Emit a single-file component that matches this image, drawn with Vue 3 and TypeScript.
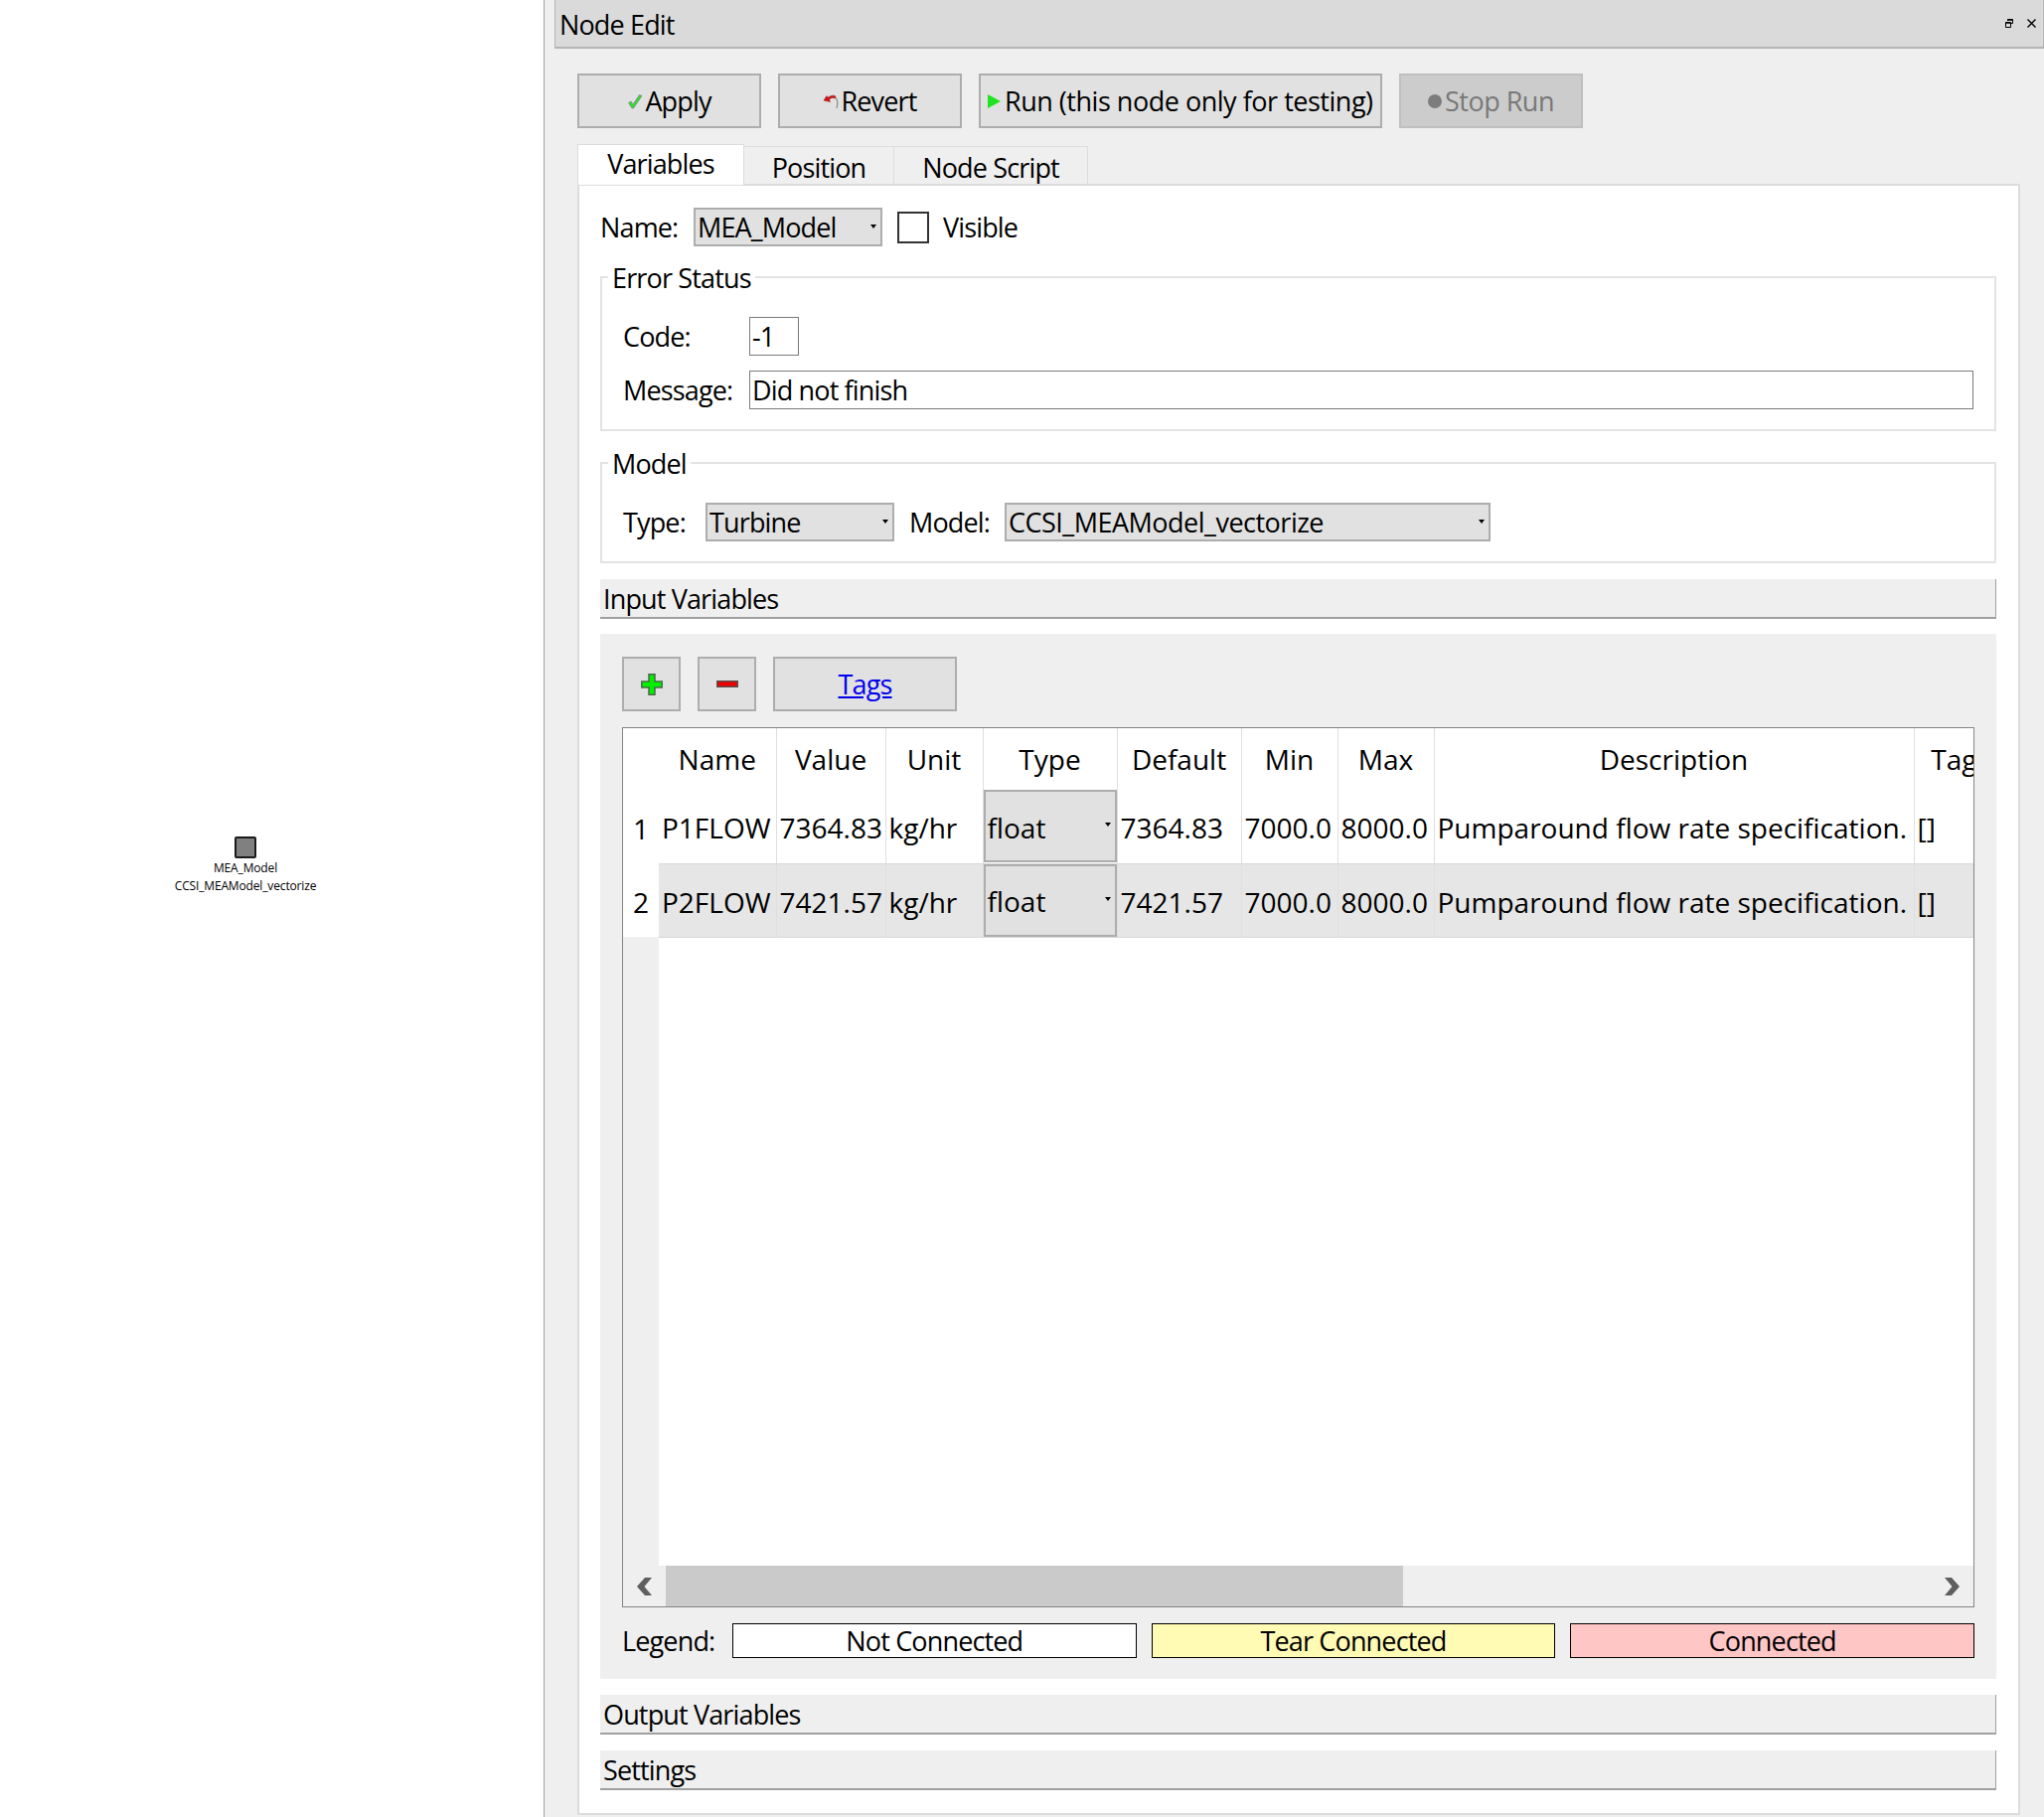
<script setup lang="ts">
interface Row {
  id: number
  name: string
  value: string
  unit: string
  type: string
  def: string
  min: string
  max: string
  desc: string
  tags: string
}

const columns = ['Name', 'Value', 'Unit', 'Type', 'Default', 'Min', 'Max', 'Description', 'Tags']

const rows: Row[] = [
  { id: 1, name: 'P1FLOW', value: '7364.83', unit: 'kg/hr', type: 'float', def: '7364.83', min: '7000.0', max: '8000.0', desc: 'Pumparound flow rate specification.', tags: '[]' },
  { id: 2, name: 'P2FLOW', value: '7421.57', unit: 'kg/hr', type: 'float', def: '7421.57', min: '7000.0', max: '8000.0', desc: 'Pumparound flow rate specification.', tags: '[]' }
]
</script>

<template>
  <div class="app">
    <div class="canvas">
      <div class="node">
        <div class="node-box" />
        <div class="node-label">MEA_Model</div>
        <div class="node-label">CCSI_MEAModel_vectorize</div>
      </div>
    </div>

    <div class="dock">
      <div class="dock-title">
        <span>Node Edit</span>
        <div class="dock-controls">
          <svg width="8" height="9" viewBox="0 0 8 9">
            <path d="M2.500 2V.5h5v4H6M.5 3.500h5v5h-5z" fill="none" stroke="#000" />
            <path d="M2.500 1h5M.5 4h5" fill="none" stroke="#000" stroke-width="1.500" />
          </svg>
          <svg width="9" height="9" viewBox="0 0 9 9">
            <path d="M.5.5l8 8M8.500.5l-8 8" fill="none" stroke="#000" stroke-width="1.400" />
          </svg>
        </div>
      </div>

      <div class="dock-body">
        <div class="actions">
          <button class="btn">
            <svg width="16" height="16" viewBox="0 0 16 16">
              <path d="M1.500 9.500L4 8l2 3L12.500 1.500 15 2.500 6.500 15H5z" fill="#2fdc2f" stroke="#8a8a8a" stroke-width=".8" />
            </svg>
            Apply
          </button>
          <button class="btn">
            <svg width="16" height="16" viewBox="0 0 16 16">
              <path d="M14 15c1.500-5 1-10-2-11" fill="none" stroke="#8a8a8a" stroke-width="1.200" />
              <path d="M1 7l3-4.500 1 1.800C8 2 11 1.500 13 3L12 5C10 4 8 4.500 6.500 6.500l1 2z" fill="#d01414" stroke="#8a1010" stroke-width=".5" />
            </svg>
            Revert
          </button>
          <button class="btn btn-run">
            <svg width="13" height="14" viewBox="0 0 13 14">
              <path d="M0 0l13 7L0 14z" fill="#1fe41f" />
            </svg>
            Run (this node only for testing)
          </button>
          <button class="btn btn-disabled">
            <span class="stop-dot" />
            Stop Run
          </button>
        </div>

        <div class="tabs">
          <div class="tab tab-active">Variables</div>
          <div class="tab tab-position">Position</div>
          <div class="tab tab-script">Node Script</div>
        </div>

        <div class="pane">
          <div class="name-row">
            <label class="name-label">Name:</label>
            <div class="combo name-combo">MEA_Model<i class="arrow" /></div>
            <span class="check" />
            <label>Visible</label>
          </div>

          <fieldset class="group error-group">
            <legend>Error Status</legend>
            <div class="form-row">
              <label class="form-label">Code:</label>
              <div class="field code-field">-1</div>
            </div>
            <div class="form-row">
              <label class="form-label">Message:</label>
              <div class="field message-field">Did not finish</div>
            </div>
          </fieldset>

          <fieldset class="group model-group">
            <legend>Model</legend>
            <div class="form-row">
              <label class="type-label">Type:</label>
              <div class="combo type-combo">Turbine<i class="arrow" /></div>
              <label class="model-label">Model:</label>
              <div class="combo model-combo">CCSI_MEAModel_vectorize<i class="arrow" /></div>
            </div>
          </fieldset>

          <div class="section-bar input-bar">Input Variables</div>

          <div class="input-panel">
            <div class="toolbar">
              <button class="btn btn-icon">
                <svg width="22" height="22" viewBox="0 0 22 22">
                  <path d="M8 .8h6v7.200h7.200v6H14v7.200H8V14H.8V8H8z" fill="#00f000" stroke="#4a6a4a" stroke-width="1.500" />
                </svg>
              </button>
              <button class="btn btn-icon">
                <svg width="22" height="7" viewBox="0 0 22 7">
                  <path d="M.8.8h20.400v5.400H.8z" fill="#f00000" stroke="#5a4a4a" stroke-width="1.500" />
                </svg>
              </button>
              <button class="btn btn-tags"><a class="tags-link">Tags</a></button>
            </div>

            <div class="grid">
              <table class="grid-table">
                <colgroup>
                  <col class="c-head"><col class="c-name"><col class="c-value"><col class="c-unit"><col class="c-type">
                  <col class="c-def"><col class="c-min"><col class="c-max"><col class="c-desc"><col class="c-tags">
                </colgroup>
                <thead>
                  <tr>
                    <th class="row-head" />
                    <th v-for="c in columns" :key="c">{{ c }}</th>
                  </tr>
                </thead>
                <tbody>
                  <tr v-for="r in rows" :key="r.id" :class="{ alt: r.id % 2 === 0 }">
                    <th class="row-head">{{ r.id }}</th>
                    <td>{{ r.name }}</td>
                    <td>{{ r.value }}</td>
                    <td>{{ r.unit }}</td>
                    <td class="type-cell"><div class="combo cell-combo">{{ r.type }}<i class="arrow" /></div></td>
                    <td>{{ r.def }}</td>
                    <td>{{ r.min }}</td>
                    <td>{{ r.max }}</td>
                    <td>{{ r.desc }}</td>
                    <td>{{ r.tags }}</td>
                  </tr>
                  <tr class="filler">
                    <th class="row-head" />
                    <td colspan="9" />
                  </tr>
                </tbody>
              </table>
              <div class="scrollbar">
                <div class="scroll-btn">
                  <svg width="17" height="18" viewBox="0 0 17 18"><path d="M9 0h7L8.500 9l7.500 9H9L1 9z" fill="#5f5f5f" /></svg>
                </div>
                <div class="scroll-thumb" />
                <div class="scroll-track" />
                <div class="scroll-btn">
                  <svg width="17" height="18" viewBox="0 0 17 18"><path d="M8 0H1l7.500 9L1 18h7l8-9z" fill="#5f5f5f" /></svg>
                </div>
              </div>
            </div>

            <div class="legend-row">
              <label>Legend:</label>
              <div class="legend-box not-connected">Not Connected</div>
              <div class="legend-box tear">Tear Connected</div>
              <div class="legend-box connected">Connected</div>
            </div>
          </div>

          <div class="section-bar output-bar">Output Variables</div>
          <div class="section-bar settings-bar">Settings</div>
        </div>
      </div>
    </div>
  </div>
</template>

<style>
html, body {
  margin: 0;
  background: #fff;
}
</style>

<style scoped>
.app {
  display: flex;
  width: 2057px;
  height: 1829px;
  overflow: hidden;
  font-family: "Open Sans", "Liberation Sans", sans-serif;
  font-size: 27px;
  letter-spacing: -0.85px;
  color: #000;
}

.canvas {
  width: 547px;
  flex: none;
  position: relative;
  background: #fff;
  border-right: 1px solid #a0a0a0;
  box-sizing: content-box;
}

.node {
  position: absolute;
  left: 147px;
  top: 842px;
  width: 200px;
  display: flex;
  flex-direction: column;
  align-items: center;
}

.node-box {
  width: 18px;
  height: 18px;
  background: #808080;
  border: 2px solid #1a1a1a;
  border-radius: 2px;
  margin-bottom: 1px;
}

.node-label {
  font-size: 12px;
  line-height: 18px;
  letter-spacing: -0.15px;
  white-space: nowrap;
}

.dock {
  flex: 1;
  display: flex;
  flex-direction: column;
  background: #efefef;
  padding-left: 10px;
  min-width: 0;
}

.dock-title {
  height: 47px;
  box-sizing: content-box;
  display: flex;
  align-items: center;
  justify-content: space-between;
  background: #dadada;
  border-bottom: 2px solid #b4b4b4;
  border-left: 1px solid #b4b4b4;
  border-right: 1px solid #b4b4b4;
  padding-left: 4px;
  flex: none;
}

.dock-title span {
  padding-top: 2px;
}

.dock-controls {
  display: flex;
  align-items: center;
  gap: 14px;
  padding-right: 7px;
}

.dock-body {
  flex: 1;
  display: flex;
  flex-direction: column;
  padding: 25px 24px 2px 23px;
}

.actions {
  display: flex;
  gap: 17px;
}

.btn {
  height: 55px;
  width: 185px;
  box-sizing: border-box;
  display: flex;
  align-items: center;
  justify-content: center;
  gap: 2px;
  padding: 0;
  background: #e1e1e1;
  border: 2px solid #adadad;
  font: inherit;
  letter-spacing: inherit;
  color: #000;
}

.btn-run {
  width: 406px;
  justify-content: flex-start;
  padding-left: 7px;
  gap: 4px;
  letter-spacing: -0.48px;
}

.btn-disabled {
  background: #cccccc;
  border-color: #bfbfbf;
  color: #787878;
  letter-spacing: -0.5px;
  gap: 3px;
}

.stop-dot {
  width: 14px;
  height: 14px;
  border-radius: 50%;
  background: #7d7d7d;
}

.tabs {
  display: flex;
  align-items: flex-end;
  margin-top: 16px;
  height: 40px;
  flex: none;
}

.tab {
  height: 38px;
  box-sizing: border-box;
  display: flex;
  align-items: center;
  justify-content: center;
  padding-top: 3px;
  background: #efefef;
  border: 1px solid #dcdcdc;
  border-left: none;
  border-bottom: none;
}

.tab-position {
  width: 151px;
}

.tab-script {
  width: 195px;
}

.tab-active {
  height: 41px;
  margin-bottom: -1px;
  width: 168px;
  padding: 0 0 4px;
  background: #fff;
  border-left: 1px solid #dcdcdc;
  position: relative;
  z-index: 1;
}

.pane {
  flex: 1;
  background: #fff;
  border: 2px solid #dcdcdc;
  padding: 22px 22px 0 21px;
  display: flex;
  flex-direction: column;
}

.name-row {
  display: flex;
  align-items: center;
  height: 39px;
  flex: none;
}

.name-label {
  width: 94px;
}

.combo {
  position: relative;
  box-sizing: border-box;
  height: 39px;
  display: flex;
  align-items: center;
  padding-left: 2px;
  background: #e1e1e1;
  border: 2px solid #adadad;
}

.arrow {
  position: absolute;
  right: 4px;
  top: 15px;
  width: 0;
  height: 0;
  border-left: 3px solid transparent;
  border-right: 3px solid transparent;
  border-top: 4px solid #000;
}

.name-combo {
  width: 190px;
}

.check {
  width: 32px;
  height: 32px;
  box-sizing: border-box;
  background: #fff;
  border: 2px solid #333;
  margin: 0 14px 0 15px;
}

.group {
  margin: 0;
  padding: 0 0 0 21px;
  border: 2px solid #e3e3e3;
  min-width: 0;
  flex: none;
  box-sizing: border-box;
}

.group legend {
  padding: 0 4px;
  margin-left: -15px;
  line-height: 36px;
  height: 36px;
  position: relative;
  top: 1px;
}

.error-group {
  margin-top: 13px;
  height: 173px;
}

.model-group {
  margin-top: 14px;
  height: 119px;
}

.form-row {
  display: flex;
  align-items: center;
  height: 39px;
  margin-top: 15px;
}

.error-group .form-row:first-of-type,
.model-group .form-row {
  margin-top: 22px;
}

.form-label {
  width: 127px;
  flex: none;
}

.field {
  box-sizing: border-box;
  height: 39px;
  display: flex;
  align-items: center;
  padding-left: 2px;
  background: #fff;
}

.code-field {
  width: 50px;
  border: 1px solid #7a7a7a;
}

.message-field {
  width: 1232px;
  border: 1.5px solid #7a7a7a;
}

.type-label {
  width: 83px;
  flex: none;
}

.type-combo {
  width: 190px;
}

.model-label {
  margin-left: 15px;
  width: 96px;
}

.model-combo {
  width: 489px;
  letter-spacing: -0.5px;
}

.section-bar {
  box-sizing: border-box;
  height: 40px;
  flex: none;
  display: flex;
  align-items: center;
  padding-left: 3px;
  background: #efefef;
  border-right: 1px solid #a0a0a0;
  border-bottom: 2px solid #a0a0a0;
}

.input-bar {
  margin-top: 16px;
}

.output-bar {
  margin-top: 16px;
}

.settings-bar {
  margin-top: 16px;
}

.input-panel {
  margin-top: 15px;
  flex: none;
  height: 1052px;
  box-sizing: border-box;
  padding: 23px 22px 0;
  background: #efefef;
  display: flex;
  flex-direction: column;
}

.toolbar {
  display: flex;
  gap: 17px;
  flex: none;
}

.btn-icon {
  width: 59px;
}

.btn-tags {
  width: 185px;
}

.tags-link {
  color: #0000ee;
  text-decoration: underline;
}

.grid {
  margin-top: 16px;
  height: 886px;
  box-sizing: border-box;
  flex: none;
  background: #fff;
  border: 1.5px solid #858585;
  display: flex;
  flex-direction: column;
  overflow: hidden;
}

.grid-table {
  table-layout: fixed;
  width: 1393px;
  flex: none;
  border-collapse: collapse;
  border-spacing: 0;
  font-size: 28px;
  letter-spacing: 0;
}

.c-head { width: 36px; }
.c-name { width: 118px; }
.c-value { width: 110px; }
.c-unit { width: 98px; }
.c-type { width: 135px; }
.c-def { width: 125px; }
.c-min { width: 97px; }
.c-max { width: 97px; }
.c-desc { width: 483px; }
.c-tags { width: 94px; }

.grid-table th,
.grid-table td {
  padding: 0;
  font-weight: 400;
  white-space: nowrap;
  overflow: hidden;
  border-right: 1px solid #dfdfdf;
}

.grid-table thead th {
  height: 62px;
  text-align: center;
  box-sizing: border-box;
}

.grid-table tbody td {
  height: 74px;
  padding: 3px 0 0 3px;
  box-sizing: border-box;
  border-bottom: 1px solid #d8d8d8;
}

.grid-table tbody .row-head {
  padding-top: 3px;
}

.grid-table .row-head {
  border-right: none;
  text-align: center;
  background: #fff;
}

.alt td {
  background: #e6e6e6;
}

.grid-table .type-cell {
  padding: 0;
  vertical-align: middle;
}

.cell-combo {
  height: 73px;
  padding-top: 2px;
}

.cell-combo .arrow {
  top: 31px;
}

.filler td,
.filler .row-head {
  height: 630px !important;
  border: none !important;
}

.grid-table .filler .row-head {
  background: #efefef;
}

.grid-table .filler td {
  background: #fff;
}

.scrollbar {
  display: flex;
  height: 41px;
  flex: none;
  margin-top: auto;
  background: #efefef;
}

.scroll-btn {
  width: 43px;
  flex: none;
  display: flex;
  align-items: center;
  justify-content: center;
}

.scroll-thumb {
  width: 742px;
  flex: none;
  background: #cacaca;
}

.scroll-track {
  flex: 1;
}

.legend-row {
  display: flex;
  align-items: center;
  margin-top: 15px;
  flex: none;
}

.legend-row label {
  width: 111px;
  flex: none;
}

.legend-box {
  box-sizing: border-box;
  height: 35px;
  width: 407px;
  display: flex;
  align-items: center;
  justify-content: center;
  border: 1.5px solid #000;
  margin-right: 15px;
}

.not-connected {
  background: #fff;
}

.tear {
  background: #fffab4;
}

.connected {
  background: #ffc6c6;
  margin-right: 0;
}
</style>
